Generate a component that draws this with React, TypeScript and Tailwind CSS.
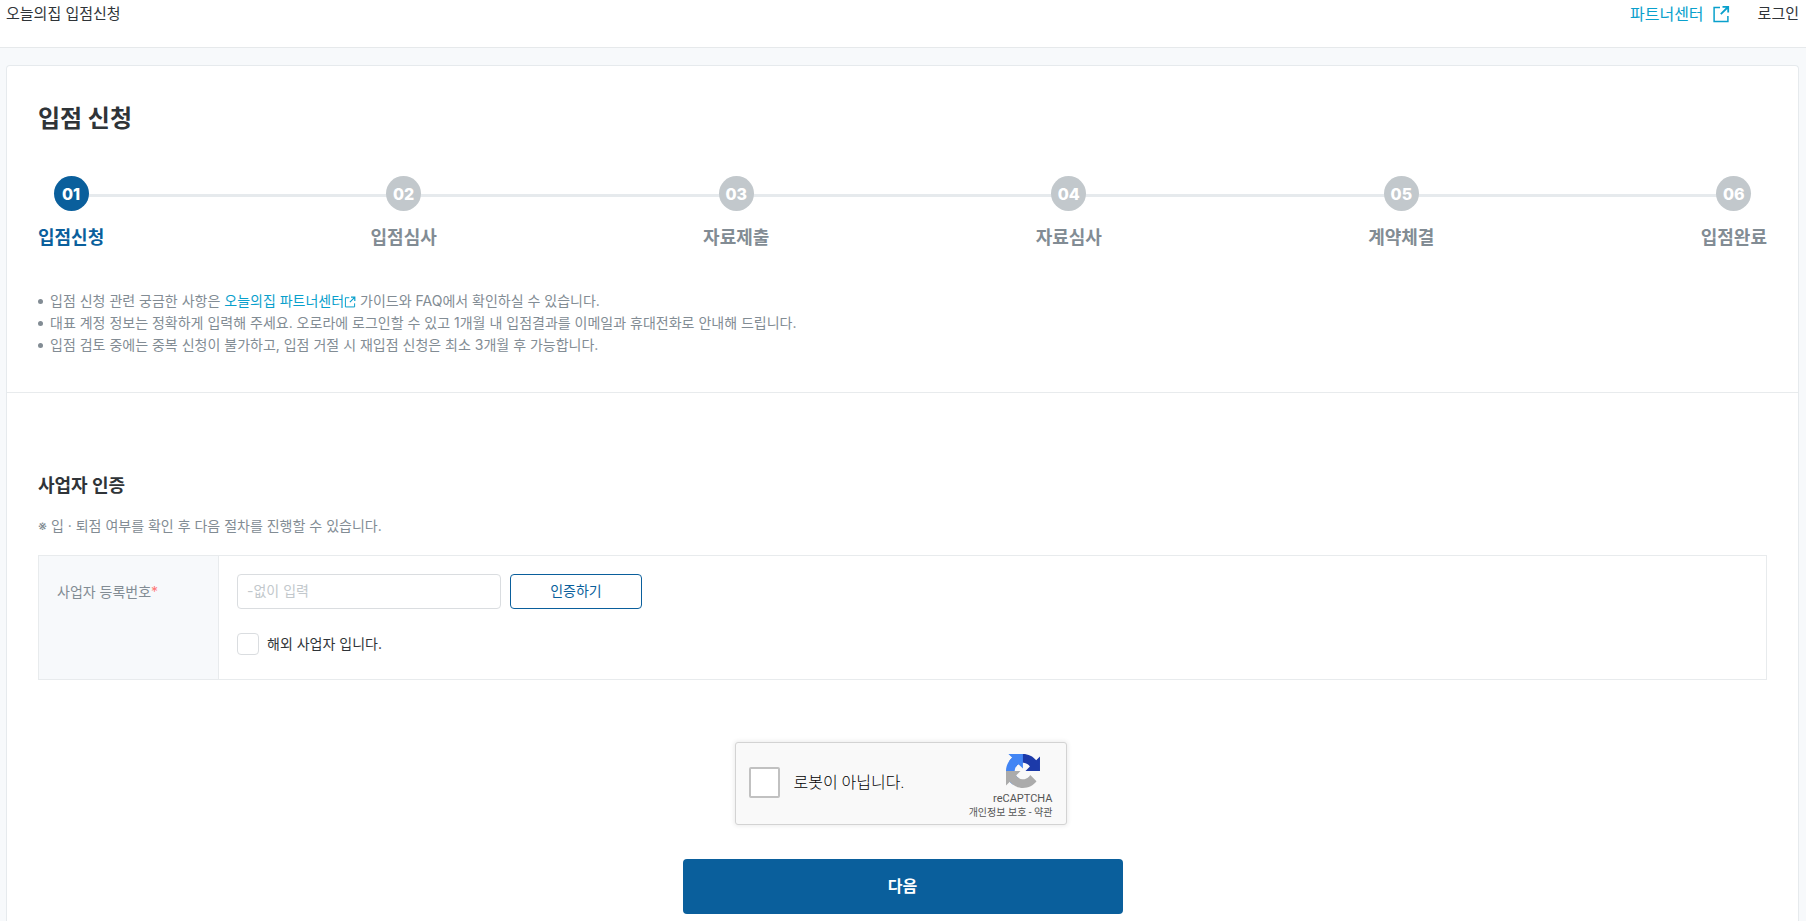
const steps = [
  { no: "01", label: "입점신청" },
  { no: "02", label: "입점심사" },
  { no: "03", label: "자료제출" },
  { no: "04", label: "자료심사" },
  { no: "05", label: "계약체결" },
  { no: "06", label: "입점완료" },
];

function ExternalIcon({ className }: { className: string }) {
  return (
    <svg className={className} viewBox="0 0 18 18" fill="none" stroke="currentColor" aria-hidden="true">
      <path d="M8 2.6H2.1V16.4H15.9V11" strokeWidth="1.5" />
      <path d="M10.5 1.8H16.2V7.5M16 2L8.8 9.2" strokeWidth="1.8" />
    </svg>
  );
}

function RecaptchaLogo() {
  return (
    <svg className="h-[34px] w-[34px]" viewBox="0 0 64 64" aria-hidden="true">
      <path
        fill="#1c3aa9"
        d="M64 31.955l-.033-1.37V4.687l-7.16 7.16C50.948 4.674 42.033.093 32.05.093c-10.4 0-19.622 4.96-25.458 12.64l11.736 11.86a15.55 15.55 0 0 1 4.754-5.334c2.05-1.6 4.952-2.906 8.968-2.906.485 0 .86.057 1.135.163 4.976.393 9.288 3.14 11.828 7.124l-8.307 8.307L64 31.953"
      />
      <path
        fill="#4285f4"
        d="M31.862.094l-1.37.033H4.594l7.16 7.16C4.58 13.147 0 22.06 0 32.046c0 10.4 4.96 19.622 12.64 25.458L24.5 45.768a15.55 15.55 0 0 1-5.334-4.754c-1.6-2.05-2.906-4.952-2.906-8.968 0-.485.057-.86.163-1.135.393-4.976 3.14-9.288 7.124-11.828l8.307 8.307L31.86.095"
      />
      <path
        fill="#ababab"
        d="M.001 32.045l.033 1.37v25.898l7.16-7.16c5.86 7.173 14.774 11.754 24.76 11.754 10.4 0 19.622-4.96 25.458-12.64l-11.736-11.86a15.55 15.55 0 0 1-4.754 5.334c-2.05 1.6-4.952 2.906-8.968 2.906-.485 0-.86-.057-1.135-.163-4.976-.393-9.288-3.14-11.828-7.124l8.307-8.307c-10.522.04-22.4.066-27.295-.005"
      />
    </svg>
  );
}

export default function App() {
  return (
    <div className="min-h-screen bg-[#f7f9fb] font-[Inter,'Noto_Sans_CJK_KR',sans-serif] text-[#2f3438]">
      <header className="flex h-12 items-start justify-between border-b border-[#e6e9eb] bg-white pt-1 pr-[7px] pl-1.5 text-[15px] leading-5">
        <h1>오늘의집 입점신청</h1>
        <nav className="flex items-start gap-7">
          <a href="#partner" className="flex items-center gap-2 text-base leading-5 text-[#09a0cc]">
            파트너센터
            <ExternalIcon className="h-[18px] w-[18px]" />
          </a>
          <a href="#login">로그인</a>
        </nav>
      </header>

      <main className="mt-[17px] mr-[7px] ml-1.5 rounded-t border border-b-0 border-[#e6eaed] bg-white">
        <section className="border-b border-[#e8ebed] px-[31px] pt-9 pb-9">
          <h2 className="text-2xl leading-[34px] font-bold">입점 신청</h2>

          <div className="relative mt-10">
            <div className="absolute inset-x-9 top-[18px] h-[3px] bg-[#e6eaed]" />
            <ol className="relative flex justify-between">
              {steps.map((step, i) => (
                <li
                  key={step.no}
                  className={`flex flex-col items-center gap-[13px] text-lg leading-7 font-bold ${i === 0 ? "text-[#0a5f9c]" : "text-[#828c94]"}`}
                >
                  <span
                    className={`flex h-[35px] w-[35px] items-center justify-center rounded-full text-base font-extrabold text-white ${i === 0 ? "bg-[#0a5f9c]" : "bg-[#c2c8cc]"}`}
                  >
                    {step.no}
                  </span>
                  {step.label}
                </li>
              ))}
            </ol>
          </div>

          <ul className="mt-[38px] text-sm leading-[22px] text-[#828c94]">
            <li className="flex items-center gap-[7px]">
              <span className="h-[5px] w-[5px] rounded-full bg-[#828c94]" />
              <p>
                입점 신청 관련 궁금한 사항은{" "}
                <a href="#guide" className="text-[#09a0cc]">
                  오늘의집 파트너센터
                  <ExternalIcon className="inline h-3 w-3" />
                </a>{" "}
                가이드와 FAQ에서 확인하실 수 있습니다.
              </p>
            </li>
            <li className="flex items-center gap-[7px]">
              <span className="h-[5px] w-[5px] rounded-full bg-[#828c94]" />
              <p>대표 계정 정보는 정확하게 입력해 주세요. 오로라에 로그인할 수 있고 1개월 내 입점결과를 이메일과 휴대전화로 안내해 드립니다.</p>
            </li>
            <li className="flex items-center gap-[7px]">
              <span className="h-[5px] w-[5px] rounded-full bg-[#828c94]" />
              <p>입점 검토 중에는 중복 신청이 불가하고, 입점 거절 시 재입점 신청은 최소 3개월 후 가능합니다.</p>
            </li>
          </ul>
        </section>

        <form className="px-[31px] pt-[81px] pb-9" onSubmit={(e) => e.preventDefault()}>
          <h3 className="text-lg leading-6 font-bold">사업자 인증</h3>
          <p className="mt-[17px] text-sm leading-[22px] text-[#828c94]">※ 입 · 퇴점 여부를 확인 후 다음 절차를 진행할 수 있습니다.</p>

          <table className="mt-[18px] w-full border-collapse border border-[#e8ebed] text-sm">
            <tbody>
              <tr>
                <th scope="row" className="w-[180px] border-r border-[#e8ebed] bg-[#f7f9fb] px-[18px] pt-[25px] text-left align-top font-normal text-[#828c94]">
                  <label htmlFor="bizNo" className="leading-[22px]">
                    사업자 등록번호<span className="text-[#f77]">*</span>
                  </label>
                </th>
                <td className="px-[18px] pt-[18px] pb-6">
                  <div className="flex gap-[9px]">
                    <input
                      id="bizNo"
                      type="text"
                      placeholder="-없이 입력"
                      className="h-[35px] w-[264px] rounded border border-[#dadde0] px-[9px] pb-[2px] placeholder:text-[#c2c8cc]"
                    />
                    <button type="button" className="h-[35px] w-[132px] rounded border border-[#0a5f9c] bg-white pb-[2px] text-[#0a5f9c]">
                      인증하기
                    </button>
                  </div>
                  <label className="mt-6 flex w-fit items-center gap-2 leading-[22px]">
                    <input type="checkbox" className="h-[22px] w-[22px] appearance-none rounded border border-[#dadde0] bg-white" />
                    해외 사업자 입니다.
                  </label>
                </td>
              </tr>
            </tbody>
          </table>

          <div className="mx-auto mt-[62px] w-[336px] pr-1">
            <div className="flex h-[83px] items-center rounded-[3px] border border-[#d3d3d3] bg-[#f9f9f9] pr-[13px] pl-[13px] font-[Roboto,'Noto_Sans_CJK_KR',sans-serif] shadow-[0_0_4px_1px_rgba(0,0,0,0.08)]">
              <label className="flex items-center gap-[14px] pb-[2px] text-base font-light text-black">
                <input type="checkbox" className="h-[31px] w-[31px] appearance-none rounded-[2px] border-2 border-[#c1c1c1] bg-white" />
                로봇이 아닙니다.
              </label>
              <div className="ml-auto flex flex-col items-end pt-[5px] text-[#555]">
                <div className="flex flex-col items-center">
                  <RecaptchaLogo />
                  <span className="mt-[3px] text-[11px] leading-4">reCAPTCHA</span>
                </div>
                <p className="text-[10px] leading-3">
                  <a href="#privacy">개인정보 보호</a> - <a href="#terms">약관</a>
                </p>
              </div>
            </div>
          </div>

          <button type="submit" className="mx-auto mt-[34px] block h-[55px] w-[440px] rounded bg-[#0a5f9c] pb-[2px] text-base font-bold text-white">
            다음
          </button>
        </form>
      </main>
    </div>
  );
}
